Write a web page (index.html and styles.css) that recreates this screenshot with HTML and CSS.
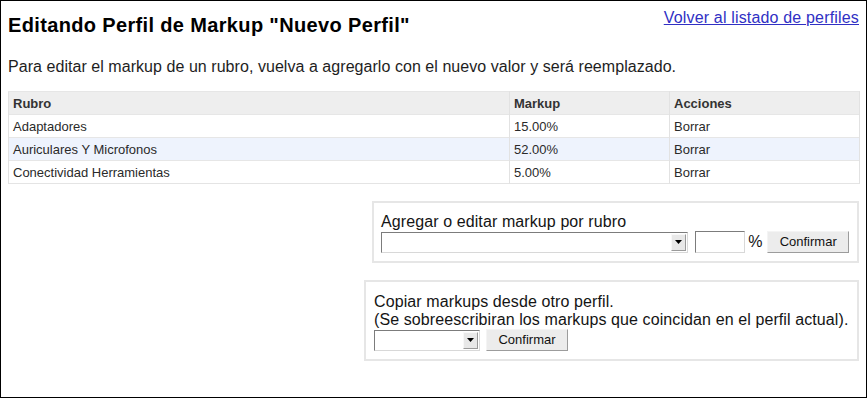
FILE: index.html
```html
<!DOCTYPE html>
<html lang="es">
<head>
<meta charset="utf-8">
<title>Editando Perfil de Markup</title>
<link rel="stylesheet" href="styles.css">
</head>
<body>
<div class="frame">
  <div class="header">
    <h1 class="title">Editando Perfil de Markup "Nuevo Perfil"</h1>
    <a class="back" href="#">Volver al listado de perfiles</a>
  </div>
  <p class="intro">Para editar el markup de un rubro, vuelva a agregarlo con el nuevo valor y será reemplazado.</p>
  <table class="grid">
    <thead>
      <tr><th class="c-rubro">Rubro</th><th class="c-markup">Markup</th><th class="c-acc">Acciones</th></tr>
    </thead>
    <tbody>
      <tr><td>Adaptadores</td><td>15.00%</td><td>Borrar</td></tr>
      <tr class="alt"><td>Auriculares Y Microfonos</td><td>52.00%</td><td>Borrar</td></tr>
      <tr><td>Conectividad Herramientas</td><td>5.00%</td><td>Borrar</td></tr>
    </tbody>
  </table>
  <div class="forms">
    <div class="box box-add">
      <div class="label">Agregar o editar markup por rubro</div>
      <div class="controls">
        <div class="select sel-wide"><span class="field"></span><span class="arrow"><svg width="7" height="4" viewBox="0 0 7 4"><path d="M0 0H7L3.5 4Z" fill="#000"/></svg></span></div>
        <span class="input"></span>
        <span class="pct">%</span>
        <span class="btn">Confirmar</span>
      </div>
    </div>
    <div class="box box-copy">
      <div class="label">Copiar markups desde otro perfil.</div>
      <div class="label">(Se sobreescribiran los markups que coincidan en el perfil actual).</div>
      <div class="controls">
        <div class="select sel-small"><span class="field"></span><span class="arrow"><svg width="7" height="4" viewBox="0 0 7 4"><path d="M0 0H7L3.5 4Z" fill="#000"/></svg></span></div>
        <span class="btn">Confirmar</span>
      </div>
    </div>
  </div>
</div>
</body>
</html>
```
FILE: styles.css
```css
html, body {
  margin: 0;
  padding: 0;
  background: #fff;
}
body {
  font-family: "Liberation Sans", Arial, sans-serif;
}
.frame {
  box-sizing: border-box;
  width: 867px;
  height: 398px;
  border: 1px solid #000;
  padding: 0 7px;
}
.header {
  display: flex;
  justify-content: space-between;
  align-items: flex-start;
}
.title {
  margin: 12px 0 0;
  font-size: 20px;
  line-height: 24px;
  font-weight: bold;
  letter-spacing: 0.35px;
  color: #000;
}
.back {
  margin-top: 8px;
  font-size: 16px;
  line-height: 18px;
  letter-spacing: 0.17px;
  color: #3030c4;
  text-decoration: underline;
}
.intro {
  margin: 21px 0 0;
  font-size: 16px;
  line-height: 18px;
  letter-spacing: 0.05px;
  color: #1e1e1e;
}
.grid {
  margin-top: 15px;
  width: 852px;
  border-collapse: collapse;
  table-layout: fixed;
  font-size: 13px;
  color: #2a2a2a;
  border: 1px solid #e4e4e4;
}
.grid th, .grid td {
  height: 22px;
  padding: 0 4px;
  text-align: left;
  border-top: 1px solid #e6e6e6;
  border-left: 1px solid #e2e2e2;
  border-right: 1px solid #e2e2e2;
  vertical-align: middle;
}
.grid th {
  background: #eeeeee;
  font-weight: bold;
  color: #333;
}
.grid .c-rubro { width: 492px; }
.grid .c-markup { width: 151px; }
.grid tr.alt td { background: #eef3fd; }
.forms {
  margin-top: 17px;
  display: flex;
  flex-direction: column;
  align-items: flex-end;
  gap: 17px;
}
.box {
  box-sizing: border-box;
  border: 2px solid #e6e6e6;
  padding: 10px 8px 8px;
  font-size: 16px;
  line-height: 18px;
  letter-spacing: 0.1px;
  color: #141414;
}
.label {
  white-space: nowrap;
}
.box-add { width: 487px; padding-left: 7px; }
.box-copy { width: 495px; padding-top: 11px; padding-right: 4px; }
.controls {
  display: flex;
  align-items: center;
  height: 22px;
  letter-spacing: 0;
}
.select {
  box-sizing: border-box;
  display: flex;
  height: 21px;
  border-top: 1px solid #7c7c7c;
  border-left: 1px solid #7c7c7c;
  border-bottom: 1px solid #d8d8d8;
  border-right: 1px solid #d8d8d8;
  background: #fff;
}
.sel-wide { width: 309px; }
.sel-small { width: 106px; }
.select .field { flex: 1; }
.select .arrow {
  box-sizing: border-box;
  width: 15px;
  margin: 1px 1px 1px 0;
  display: flex;
  align-items: center;
  justify-content: center;
  background: #e8e8e8;
  border-top: 1px solid #f8f8f8;
  border-left: 1px solid #f8f8f8;
  border-right: 1px solid #9a9a9a;
  border-bottom: 1px solid #9a9a9a;
}
.input {
  box-sizing: border-box;
  width: 50px;
  height: 22px;
  margin-left: 7px;
  border-top: 1px solid #7c7c7c;
  border-left: 1px solid #7c7c7c;
  border-bottom: 1px solid #d8d8d8;
  border-right: 1px solid #d8d8d8;
}
.pct {
  font-size: 16px;
  margin-left: 3px;
  margin-right: 5px;
}
.btn {
  box-sizing: border-box;
  height: 22px;
  width: 82px;
  display: flex;
  align-items: center;
  justify-content: center;
  font-size: 13px;
  color: #111;
  background: #ececec;
  border-top: 1px solid #f4f4f4;
  border-left: 1px solid #f4f4f4;
  border-right: 1px solid #9c9c9c;
  border-bottom: 1px solid #9c9c9c;
}
.box-copy .btn {
  margin-left: 6px;
}
```
